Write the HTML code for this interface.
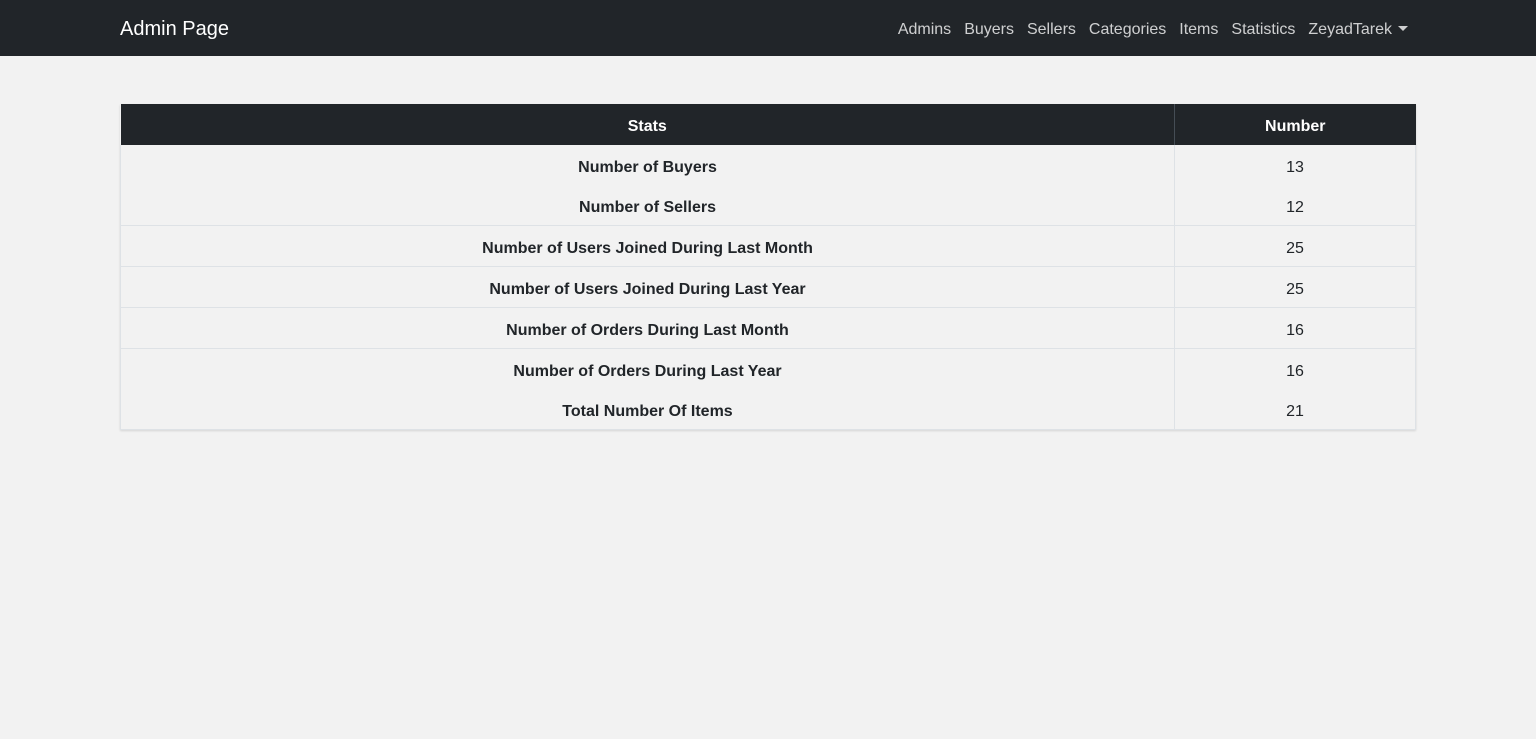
<!DOCTYPE html>
<html><head><style>
body{margin:0;background:#f2f2f2;font-family:"Liberation Sans",sans-serif;color:#212529;}
.nav{height:56px;background:#212529;position:relative;}
.brand{position:absolute;left:120px;top:18px;font-size:20px;color:#fff;}
.links{position:absolute;right:128px;top:21px;font-size:16px;color:rgba(255,255,255,.78);}
.links span{margin-left:13px;}
.caret{display:inline-block;width:0;height:0;border-left:5px solid transparent;border-right:5px solid transparent;border-top:5px solid rgba(255,255,255,.78);vertical-align:3px;margin-left:6px;}
table{position:absolute;left:120px;top:104px;width:1296px;border-collapse:collapse;box-shadow:0 1px 2px rgba(0,0,0,.12);}
th{background:#212529;color:#fff;height:36px;padding:5px 0 0;font-weight:bold;font-size:16px;}
td{height:35px;padding:5px 0 0;text-align:center;font-size:16px;}
td:first-child{font-weight:bold;border-left:1px solid #dee2e6;}
td:last-child,th:last-child{width:240px;border-left:1px solid #dee2e6;border-right:1px solid #dee2e6;}
th:last-child{border-left:1px solid #454d55;border-right:none}
tr.b td{border-top:1px solid #dee2e6;}
tr:last-child td{border-bottom:1px solid #dee2e6;}
</style></head><body>
<div class="nav"><div class="brand">Admin Page</div>
<div class="links"><span>Admins</span><span>Buyers</span><span>Sellers</span><span>Categories</span><span>Items</span><span>Statistics</span><span>ZeyadTarek<i class="caret"></i></span></div></div>
<table>
<tr><th>Stats</th><th>Number</th></tr>
<tr><td>Number of Buyers</td><td>13</td></tr>
<tr><td>Number of Sellers</td><td>12</td></tr>
<tr class="b"><td>Number of Users Joined During Last Month</td><td>25</td></tr>
<tr class="b"><td>Number of Users Joined During Last Year</td><td>25</td></tr>
<tr class="b"><td>Number of Orders During Last Month</td><td>16</td></tr>
<tr class="b"><td>Number of Orders During Last Year</td><td>16</td></tr>
<tr><td>Total Number Of Items</td><td>21</td></tr>
</table>
</body></html>
